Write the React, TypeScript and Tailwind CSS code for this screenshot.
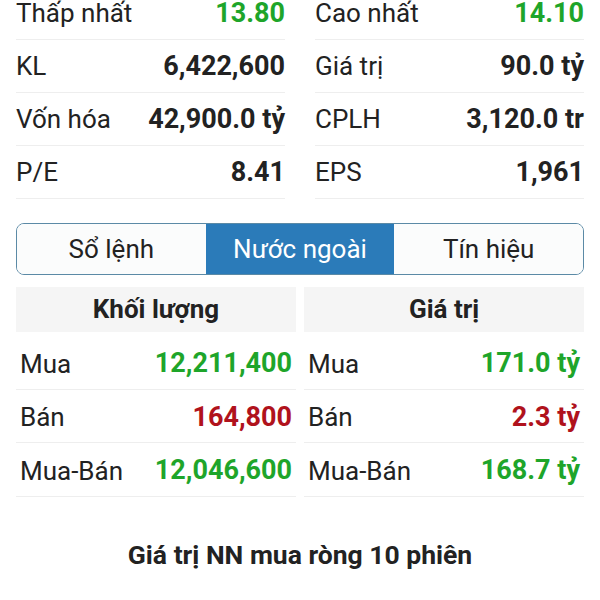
const stats = [
  [
    { label: "Thấp nhất", value: "13.80", tone: "up" },
    { label: "Cao nhất", value: "14.10", tone: "up" },
  ],
  [
    { label: "KL", value: "6,422,600" },
    { label: "Giá trị", value: "90.0 tỷ" },
  ],
  [
    { label: "Vốn hóa", value: "42,900.0 tỷ" },
    { label: "CPLH", value: "3,120.0 tr" },
  ],
  [
    { label: "P/E", value: "8.41" },
    { label: "EPS", value: "1,961" },
  ],
];

const foreign = [
  {
    title: "Khối lượng",
    rows: [
      { label: "Mua", value: "12,211,400", tone: "up" },
      { label: "Bán", value: "164,800", tone: "down" },
      { label: "Mua-Bán", value: "12,046,600", tone: "up" },
    ],
  },
  {
    title: "Giá trị",
    rows: [
      { label: "Mua", value: "171.0 tỷ", tone: "up" },
      { label: "Bán", value: "2.3 tỷ", tone: "down" },
      { label: "Mua-Bán", value: "168.7 tỷ", tone: "up" },
    ],
  },
];

const tabs = ["Sổ lệnh", "Nước ngoài", "Tín hiệu"];

function toneClass(tone?: string) {
  if (tone === "up") return "text-[#1ea52a]";
  if (tone === "down") return "text-[#b0121c]";
  return "text-[#222]";
}

export default function App() {
  return (
    <div className="h-[600px] w-[600px] overflow-hidden bg-white px-4 font-['Roboto',sans-serif] text-[#222]">
      <div className="-mt-[13px] grid grid-cols-2 gap-x-[30px]">
        {stats.map((pair, i) =>
          pair.map((s) => (
            <div
              key={`${i}-${s.label}`}
              className="flex h-[53px] items-center justify-between border-b border-[#eeeeee]"
            >
              <span className="text-[26px] leading-none">{s.label}</span>
              <span className={`text-[27px] font-bold leading-none ${toneClass(s.tone)}`}>
                {s.value}
              </span>
            </div>
          ))
        )}
      </div>

      {/* tabs */}
      <div className="mt-[24px] flex h-[52px] overflow-hidden rounded-[8px] border-[1.5px] border-[#5b8aa6]">
        {tabs.map((t) => {
          const active = t === "Nước ngoài";
          return (
            <div
              key={t}
              className={`flex flex-1 items-center justify-center text-[26px] ${
                active ? "bg-[#2b7bb9] text-white" : "bg-[#fbfcfc] text-[#222]"
              }`}
            >
              {t}
            </div>
          );
        })}
      </div>

      <div className="mt-[12px] grid grid-cols-2 gap-x-[8px]">
        {foreign.map((col) => (
          <div key={col.title}>
            <div className="flex h-[45px] items-center justify-center bg-[#f5f5f5] text-[26px] font-bold">
              {col.title}
            </div>
            <div className="mt-[4px]">
              {col.rows.map((r) => (
                <div
                  key={r.label}
                  className="flex h-[53.5px] items-center justify-between border-b border-[#eeeeee] px-[4px] pt-[3px]"
                >
                  <span className="text-[26px] leading-none">{r.label}</span>
                  <span className={`text-[27px] font-bold leading-none ${toneClass(r.tone)}`}>
                    {r.value}
                  </span>
                </div>
              ))}
            </div>
          </div>
        ))}
      </div>

      <div className="mt-[38px] text-center text-[26.5px] font-bold">
        Giá trị NN mua ròng 10 phiên
      </div>
    </div>
  );
}
